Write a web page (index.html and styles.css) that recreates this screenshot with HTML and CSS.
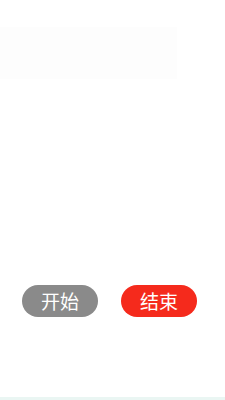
FILE: index.html
```html
<!DOCTYPE html>
<html lang="zh">
<head>
  <meta charset="UTF-8" />
  <meta name="viewport" content="width=device-width, initial-scale=1.0" />
  <title>计时</title>
  <link rel="stylesheet" href="styles.css">
</head>
<body>
  <div class="page">
    <div class="preview"></div>
    <div class="actions">
      <button class="btn btn-start">开始</button>
      <button class="btn btn-stop">结束</button>
    </div>
  </div>
  <div class="footer-bar"></div>
</body>
</html>
```

FILE: styles.css
```css
body {
  margin: 0;
  padding: 0;
  background: #ffffff;
  font-family: "Noto Sans CJK SC", "Noto Sans", sans-serif;
}

.page {
  height: 397px;
  display: flex;
  flex-direction: column;
}

.preview {
  margin-top: 27px;
  width: 177px;
  height: 52px;
  background: #fdfdfd;
}

.actions {
  margin-top: 206px;
  display: flex;
  gap: 23px;
  padding-left: 22px;
}

.btn {
  width: 76px;
  height: 32px;
  padding: 0;
  border: none;
  border-radius: 16px;
  color: #ffffff;
  font-family: "Noto Sans CJK SC", sans-serif;
  font-size: 19px;
  line-height: 32px;
  cursor: pointer;
}

.btn-start {
  background-color: #8a8a8a;
}

.btn-stop {
  background-color: #f52a1c;
}

.footer-bar {
  height: 3px;
  background: #eaf6f3;
}
```
